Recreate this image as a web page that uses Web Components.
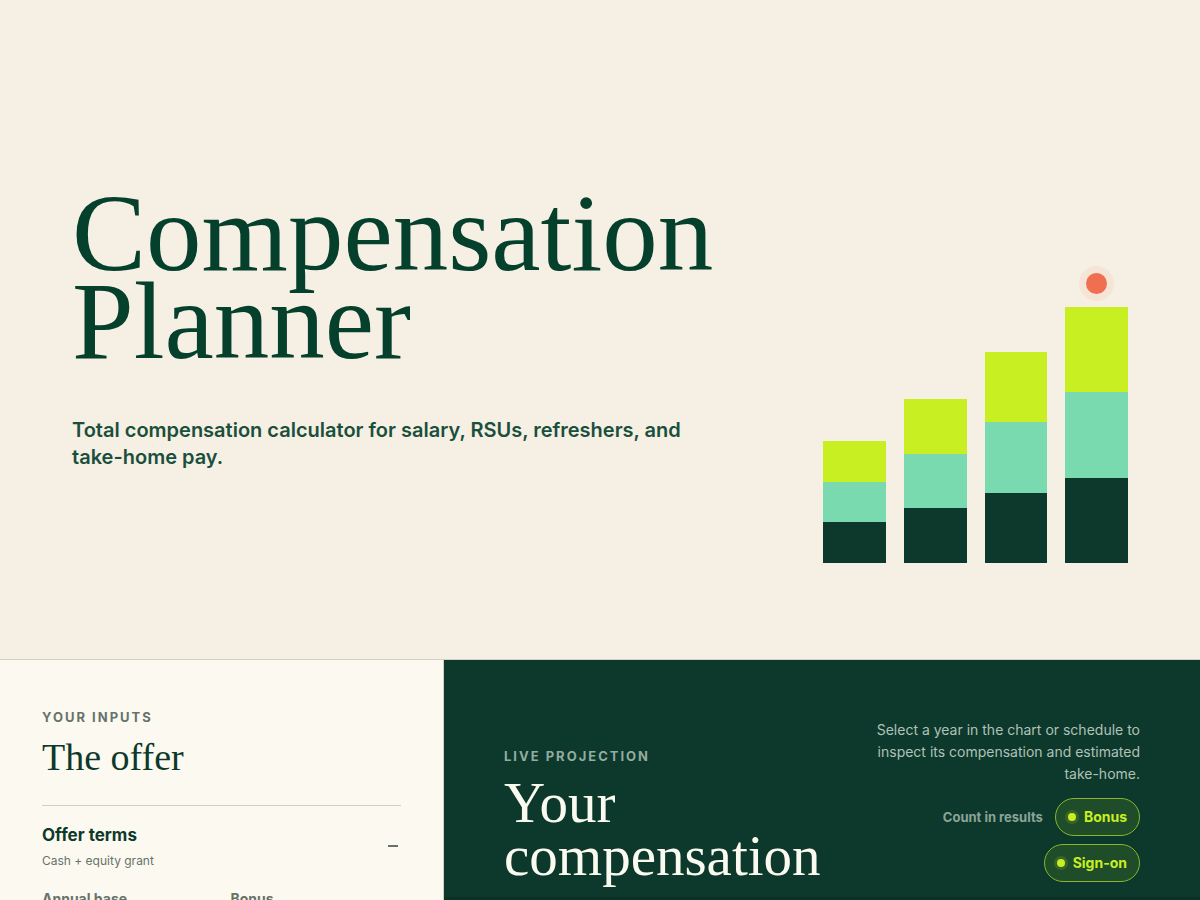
<!DOCTYPE html>
<html lang="en">
<head>
<meta charset="utf-8">
<meta name="viewport" content="width=device-width, initial-scale=1">
<title>Compensation Planner</title>
<style>
  :root {
    --ink: #0c392b; --deep: #05402c; --cream: #f6efe3; --paper: #fcf9f0;
    --lime: #c8ef22; --mint: #79d9af; --coral: #f06f50; --muted: #66736a; --rule: #cfd0c3;
    --serif: "Liberation Serif", serif;
  }
  html { background: var(--cream); scrollbar-width: none; }
  body { margin: 0; font-family: Inter, "Liberation Sans", sans-serif; color: var(--ink); }
</style>
</head>
<body>
<planner-app></planner-app>
<script>
const define = (name, html, setup) => {
  const template = document.createElement('template');
  template.innerHTML = html;
  customElements.define(name, class extends HTMLElement {
    connectedCallback() {
      if (this.shadowRoot) return;
      this.attachShadow({ mode: 'open' }).append(template.content.cloneNode(true));
      if (setup) setup(this, this.shadowRoot);
    }
  });
};

define('stack-bar', `
  <style>
    :host { display: flex; flex-direction: column; flex: 1; }
    .bar { display: flex; flex-direction: column; height: var(--size); }
    .bar div { flex: 1; }
    .top { background: var(--lime); }
    .mid { background: var(--mint); }
    .base { background: var(--ink); }
  </style>
  <slot></slot>
  <div class="bar"><div class="top"></div><div class="mid"></div><div class="base"></div></div>`,
  (host, root) => root.querySelector('.bar').style.setProperty('--size', host.getAttribute('size') + 'px'));

define('growth-chart', `
  <style>
    :host { display: flex; align-items: flex-end; gap: 18px; }
    .marker { align-self: center; width: 21px; height: 21px; margin-bottom: 13px; border-radius: 50%;
      background: var(--coral); box-shadow: 0 0 0 7px rgb(240 111 80 / 8%); }
  </style>
  <stack-bar size="122"></stack-bar>
  <stack-bar size="164"></stack-bar>
  <stack-bar size="211"></stack-bar>
  <stack-bar size="256"><div class="marker"></div></stack-bar>`);

define('page-hero', `
  <style>
    :host { display: grid; grid-template-columns: minmax(0, 1fr) 305px; gap: 40px; align-items: center;
      box-sizing: border-box; min-height: 660px; padding: 96px 72px; border-bottom: 1px solid var(--rule); }
    h1 { margin: 0 0 52px; font: 400 111px/88px var(--serif); color: var(--deep); }
    p { margin: 0; max-width: 640px; font-size: 20px; font-weight: 600; line-height: 27px; color: #1b4f3d; }
    growth-chart { align-self: end; }
  </style>
  <div><h1><slot name="title"></slot></h1><p><slot></slot></p></div>
  <growth-chart></growth-chart>`);

define('section-title', `
  <style>
    :host { display: block; }
    p { margin: 0; font-size: 13px; font-weight: 700; line-height: 16px; letter-spacing: 2px;
      text-transform: uppercase; color: var(--label, var(--muted)); }
    h2 { margin: 12px 0 0; font: 400 var(--size, 38px)/var(--line, 40px) var(--serif); }
  </style>
  <p><slot name="label"></slot></p><h2><slot></slot></h2>`);

define('money-field', `
  <style>
    :host { display: block; }
    label { display: grid; gap: 8px; font-size: 14px; font-weight: 700; line-height: 16px; color: var(--muted); }
    input { box-sizing: border-box; width: 100%; height: 44px; padding: 0 12px; border: 1px solid var(--rule);
      background: transparent; font: inherit; color: var(--ink); }
  </style>
  <label><slot></slot><input type="text" inputmode="numeric"></label>`);

define('offer-panel', `
  <style>
    :host { display: block; background: var(--paper); border-right: 1px solid var(--rule); padding: 49px 42px 42px; }
    section { margin-top: 28px; border-top: 1px solid var(--rule); padding-top: 17px; }
    button { display: flex; justify-content: space-between; align-items: center; width: 100%; padding: 0;
      border: 0; background: none; font: inherit; color: var(--ink); text-align: left; }
    .name { display: block; font-size: 17px; font-weight: 700; line-height: 24px; }
    .note { display: block; margin-top: 6px; font-size: 12px; line-height: 16px; color: var(--muted); }
    svg { width: 10px; height: 2px; margin-right: 3px; }
    .fields { display: grid; grid-template-columns: 1fr 1fr; gap: 18px; margin-top: 22px; }
  </style>
  <section-title><span slot="label">Your inputs</span>The offer</section-title>
  <section>
    <button type="button" aria-expanded="true">
      <span><span class="name">Offer terms</span><span class="note">Cash + equity grant</span></span>
      <svg viewBox="0 0 10 2" aria-hidden="true"><path d="M0 1h10" stroke="#66736a" stroke-width="2"/></svg>
    </button>
    <div class="fields"><money-field>Annual base</money-field><money-field>Bonus</money-field></div>
  </section>`);

define('toggle-pill', `
  <style>
    :host { display: block; }
    button { display: flex; align-items: center; gap: 8px; box-sizing: border-box; height: 38px; padding: 0 12px;
      border: 1px solid #85b82a; border-radius: 19px; background: #1f4d29; color: var(--lime);
      font: inherit; font-size: 14px; font-weight: 700; line-height: 16px; }
    i { width: 8px; height: 8px; border-radius: 50%; background: var(--lime); box-shadow: 0 0 0 3px rgb(200 239 34 / 15%); }
  </style>
  <button type="button" aria-pressed="true"><i></i><span><slot></slot></span></button>`);

define('projection-panel', `
  <style>
    :host { display: block; background: var(--ink); color: #fafaf0; padding: 59px 60px 0; }
    header { display: flex; justify-content: space-between; align-items: flex-end; gap: 24px; padding-bottom: 15px; }
    section-title { flex: 0 1 320px; --label: #93aca0; --size: 57px; --line: 53px; }
    aside { flex: 0 1 270px; display: grid; gap: 13px; }
    p { margin: 0; font-size: 14px; line-height: 22px; text-align: right; color: #b0c1b7; }
    .count { display: flex; flex-wrap: wrap; justify-content: flex-end; align-items: center; gap: 8px 12px; padding-left: 60px; }
    .count > span { font-size: 13px; font-weight: 700; line-height: 16px; color: #8ba498; }
    .chart { height: 60px; margin: 0 -60px; border-top: 1px solid #0a3024; background: #0a3225; }
  </style>
  <header>
    <section-title><span slot="label">Live projection</span>Your compensation</section-title>
    <aside>
      <p>Select a year in the chart or schedule to inspect its compensation and estimated take-home.</p>
      <div class="count"><span>Count in results</span><toggle-pill>Bonus</toggle-pill><toggle-pill>Sign-on</toggle-pill></div>
    </aside>
  </header>
  <div class="chart"></div>`);

define('planner-app', `
  <style>
    :host { display: block; }
    main { display: grid; grid-template-columns: 37% minmax(0, 1fr); }
  </style>
  <page-hero><span slot="title">Compensation Planner</span>Total compensation calculator for salary, RSUs, refreshers, and take-home pay.</page-hero>
  <main><offer-panel></offer-panel><projection-panel></projection-panel></main>`);
</script>
</body>
</html>
